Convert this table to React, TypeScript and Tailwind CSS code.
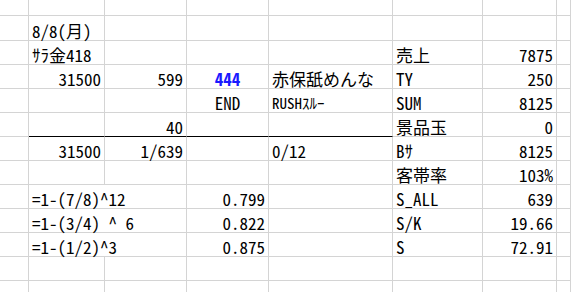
import React from 'react';

type Cell = {
  t?: string;
  a?: 'l' | 'r' | 'c';
  span?: number;
  cls?: string;
  line?: boolean;
};

const blank = (n: number): Cell[] => Array.from({ length: n }, () => ({}));

// one row per spreadsheet line, 8 columns each
const rows: { h: string; cells: Cell[] }[] = [
  { h: 'h-[16px]', cells: blank(8) },
  { h: 'h-[25px]', cells: [{}, { t: '8/8(月)' }, ...blank(6)] },
  {
    h: 'h-[24px]',
    cells: [{}, { t: 'ｻﾗ金418' }, {}, {}, {}, { t: '売上' }, { t: '7875', a: 'r' }, {}],
  },
  {
    h: 'h-[24px]',
    cells: [
      {},
      { t: '31500', a: 'r' },
      { t: '599', a: 'r' },
      { t: '444', a: 'c', cls: 'text-[#1a1aff] font-bold' },
      { t: '赤保舐めんな' },
      { t: 'TY' },
      { t: '250', a: 'r' },
      {},
    ],
  },
  {
    h: 'h-[24px]',
    cells: [
      {},
      {},
      {},
      { t: 'END', a: 'c' },
      { t: 'RUSHｽﾙｰ', cls: 'text-[15px]' },
      { t: 'SUM' },
      { t: '8125', a: 'r' },
      {},
    ],
  },
  {
    h: 'h-[24px]',
    cells: [
      {},
      { line: true },
      { t: '40', a: 'r', line: true },
      { line: true },
      { line: true },
      { t: '景品玉' },
      { t: '0', a: 'r' },
      {},
    ],
  },
  {
    h: 'h-[24px]',
    cells: [
      {},
      { t: '31500', a: 'r' },
      { t: '1/639', a: 'r' },
      {},
      { t: '0/12' },
      { t: 'Bｻ' },
      { t: '8125', a: 'r' },
      {},
    ],
  },
  {
    h: 'h-[24px]',
    cells: [{}, {}, {}, {}, {}, { t: '客帯率' }, { t: '103%', a: 'r' }, {}],
  },
  {
    h: 'h-[24px]',
    cells: [
      {},
      { t: '=1-(7/8)^12', span: 2 },
      { t: '0.799', a: 'r' },
      {},
      { t: 'S_ALL' },
      { t: '639', a: 'r' },
      {},
    ],
  },
  {
    h: 'h-[24px]',
    cells: [
      {},
      { t: '=1-(3/4) ^ 6', span: 2 },
      { t: '0.822', a: 'r' },
      {},
      { t: 'S/K' },
      { t: '19.66', a: 'r' },
      {},
    ],
  },
  {
    h: 'h-[24px]',
    cells: [
      {},
      { t: '=1-(1/2)^3', span: 2 },
      { t: '0.875', a: 'r' },
      {},
      { t: 'S' },
      { t: '72.91', a: 'r' },
      {},
    ],
  },
  { h: 'h-[24px]', cells: blank(8) },
  { h: 'h-[24px]', cells: blank(8) },
];

const alignCls = {
  l: 'justify-start pl-[3px]',
  r: 'justify-end pr-[3px]',
  c: 'justify-center',
};

export default function App() {
  return (
    <div className="w-[571px] h-[292px] overflow-hidden bg-white text-black font-['Noto_Sans_Mono_CJK_JP','Noto_Sans_CJK_JP',monospace] text-[17px] leading-[17px]">
      <div className="grid grid-cols-[29px_76px_82px_82px_124px_90px_74px_1fr]">
        {rows.map((row, ri) =>
          row.cells.map((c, ci) => (
            <div
              key={`${ri}-${ci}`}
              className={[
                'flex items-end pb-[1px] whitespace-nowrap border-r border-b',
                row.h,
                c.span === 2 ? 'col-span-2' : '',
                c.line ? 'border-r-[#d4d4d4] border-b-black' : 'border-[#d4d4d4]',
                alignCls[c.a ?? 'l'],
                c.cls ?? '',
              ].join(' ')}
            >
              {c.t}
            </div>
          ))
        )}
      </div>
    </div>
  );
}
